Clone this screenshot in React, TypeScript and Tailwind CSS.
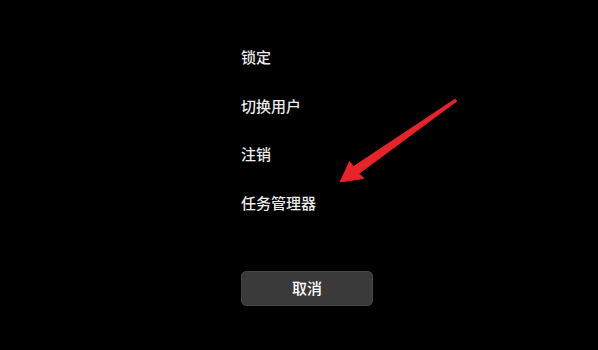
import React from "react";

const items = ["锁定", "切换用户", "注销", "任务管理器"];

function Arrow() {
  // red pointer drawn over the menu
  return (
    <svg
      className="absolute left-0 top-0"
      width="598"
      height="350"
      viewBox="0 0 598 350"
    >
      <path
        d="M455.2 99 L456.8 101.2 L359 173.5 L364 178.5 L340 182 L349.5 161.5 L353.5 166.5 Z"
        fill="#e8232a"
        stroke="#e8232a"
        strokeWidth="0.8"
        strokeLinejoin="round"
      />
    </svg>
  );
}

export default function App() {
  return (
    <div
      className="relative w-[598px] h-[350px] bg-black overflow-hidden"
      style={{ fontFamily: '"Noto Sans CJK SC", "Noto Sans", sans-serif' }}
    >
      <div className="flex flex-col pl-[241px] pt-[33px]">
        {items.map((item) => (
          <div
            key={item}
            className="h-[48.5px] flex items-center text-[15px] font-medium text-[#ececec]"
          >
            {item}
          </div>
        ))}
        <button className="mt-[44px] w-[132px] h-[35px] rounded-[5px] bg-[#3a3a3a] border border-[#454545] text-white text-[15px] font-medium flex items-center justify-center">
          取消
        </button>
      </div>
      <Arrow />
    </div>
  );
}
